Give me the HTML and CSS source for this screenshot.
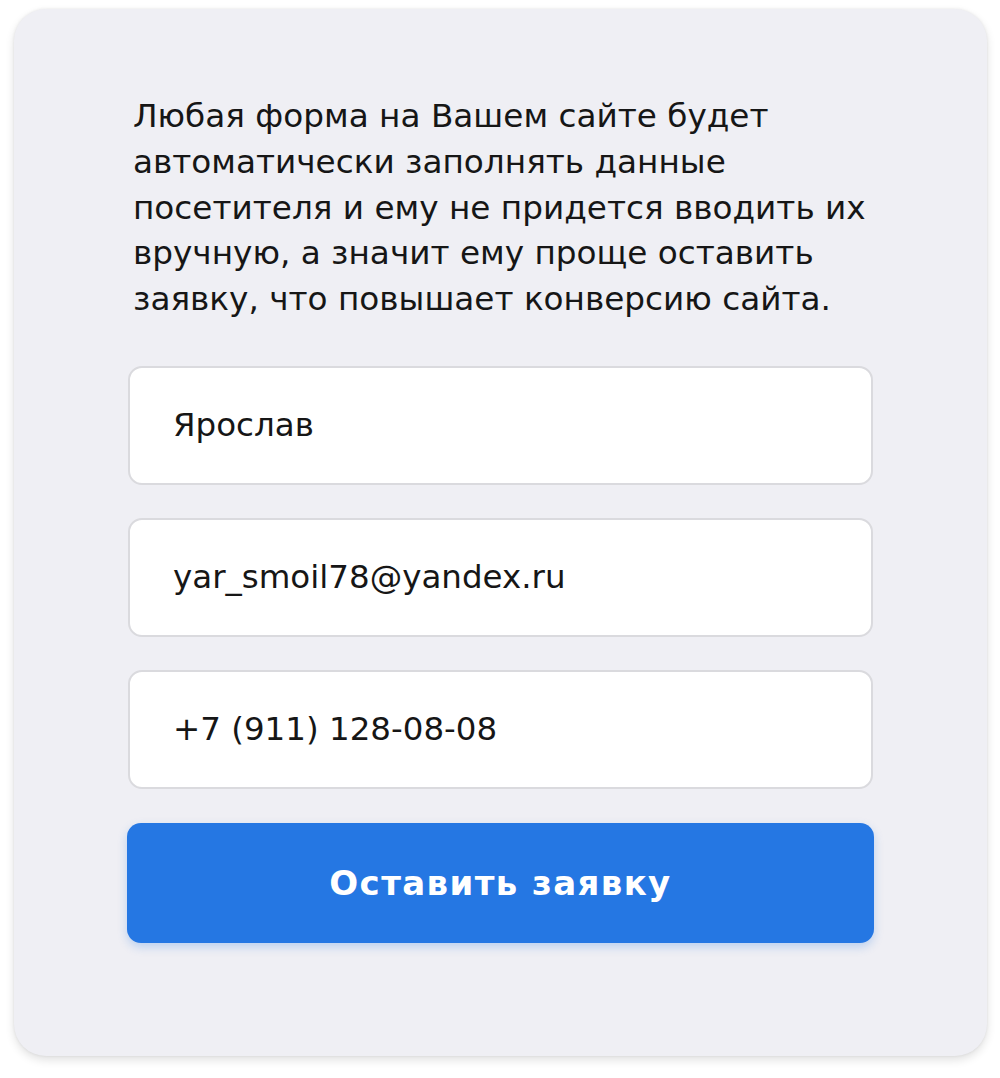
FILE: index.html
```html
<!DOCTYPE html>
<html lang="ru">
<head>
<meta charset="utf-8">
<link rel="stylesheet" href="styles.css">
</head>
<body>
<div class="card">
  <p class="lead">Любая форма на Вашем сайте будет<br>автоматически заполнять данные<br>посетителя и ему не придется вводить их<br>вручную, а значит ему проще оставить<br>заявку, что повышает конверсию сайта.</p>
  <div class="field">Ярослав</div>
  <div class="field">yar_smoil78@yandex.ru</div>
  <div class="field">+7 (911) 128-08-08</div>
  <div class="btn">Оставить заявку</div>
</div>
</body>
</html>
```

FILE: styles.css
```css
html, body {
  margin: 0;
  padding: 0;
  background: #ffffff;
}
body {
  width: 1000px;
  height: 1078px;
  padding: 9px 13px 0 14px;
  box-sizing: border-box;
  font-family: "DejaVu Sans", "Noto Sans", sans-serif;
}
.card {
  width: 973px;
  height: 1047px;
  background: #efeff4;
  border-radius: 32px;
  box-shadow: 0 4px 10px rgba(0,0,0,0.12), 0 0 3px rgba(0,0,0,0.08);
  box-sizing: border-box;
  padding: 85px 114px 0 114px;
  display: flex;
  flex-direction: column;
}
.lead {
  margin: 0 0 43px 5px;
  font-size: 32.7px;
  line-height: 45.8px;
  color: #161616;
  white-space: nowrap;
}
.field {
  height: 119px;
  box-sizing: border-box;
  background: #ffffff;
  border: 2px solid #dadade;
  border-radius: 14px;
  margin-bottom: 33px;
  padding-left: 43px;
  display: flex;
  align-items: center;
  font-size: 32.5px;
  color: #161616;
}
.btn {
  height: 120px;
  margin: 1px -1px 0 -1px;
  background: #2577e3;
  border-radius: 14px;
  box-shadow: 0 4px 10px rgba(37,119,227,0.25);
  color: #ffffff;
  font-weight: bold;
  font-size: 34px;
  letter-spacing: 1.4px;
  display: flex;
  align-items: center;
  justify-content: center;
}
```
